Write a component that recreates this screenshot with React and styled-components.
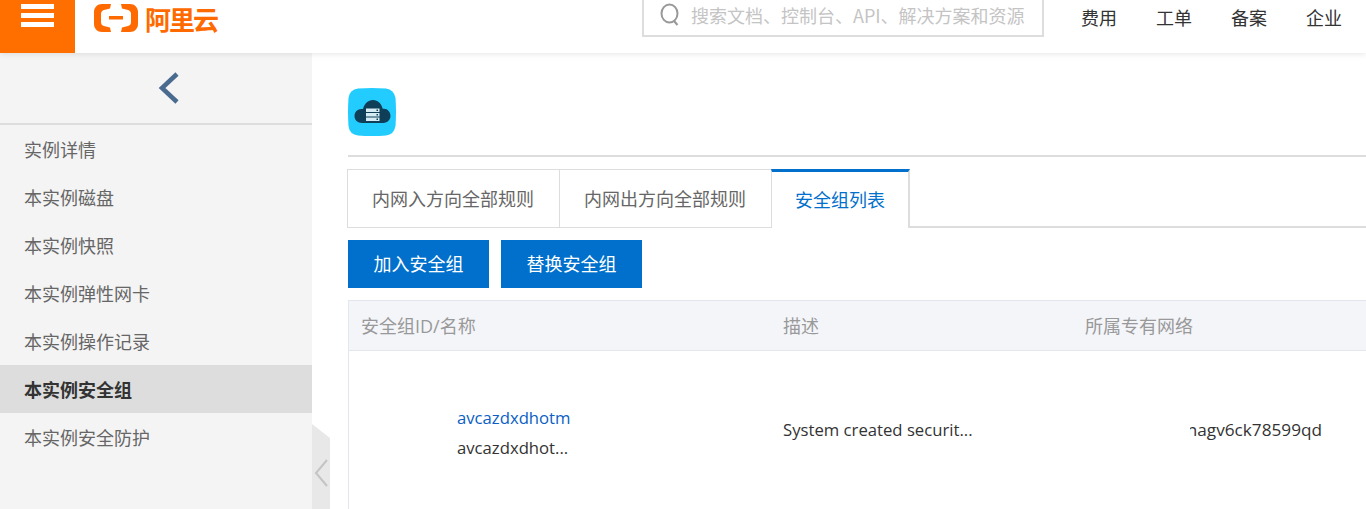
import React from 'react'
import styled, { createGlobalStyle } from 'styled-components'

const GlobalStyle = createGlobalStyle`
  html, body { margin: 0; padding: 0; height: 100%; overflow: hidden; background: #fff; }
  body { font-family: "Open Sans", "Noto Sans CJK SC", sans-serif; font-size: 18px; color: #333; }
  * { box-sizing: border-box; }
`

const Page = styled.div`
  width: 1366px;
  height: 509px;
  display: flex;
  flex-direction: column;
  overflow: hidden;
`

const Header = styled.header`
  position: relative;
  z-index: 2;
  flex: 0 0 53px;
  display: flex;
  align-items: flex-start;
  background: #fff;
  box-shadow: 0 1px 6px rgba(0, 0, 0, 0.1);
`

const MenuButton = styled.div`
  width: 75px;
  height: 53px;
  background: #ff6f00;
  display: flex;
  flex-direction: column;
  align-items: center;
  gap: 4px;
  padding-top: 4px;
`

const MenuBar = styled.span`
  width: 33px;
  height: 5px;
  background: #fff;
`

const Logo = styled.div`
  display: flex;
  align-items: center;
  gap: 7px;
  margin-left: 19px;
  height: 36px;
  color: #ff6a00;
  font-size: 26px;
  letter-spacing: -2px;
  font-weight: 700;
  font-family: "Noto Sans CJK SC", sans-serif;
`

const SearchBox = styled.div`
  width: 402px;
  height: 37px;
  margin-left: auto;
  display: flex;
  align-items: center;
  gap: 10px;
  padding: 0 0 6px 15px;
  border: 2px solid #ddd;
  border-top: 0;
  color: #c4c4c4;
  white-space: nowrap;
  font-family: "Noto Sans CJK SC", sans-serif;
`

const NavList = styled.nav`
  display: flex;
  gap: 39px;
  margin-left: 37px;
  padding: 3px 24px 0 0;
  line-height: 28px;
  color: #333;
  font-family: "Noto Sans CJK SC", sans-serif;
`

const Body = styled.div`
  position: relative;
  flex: 1;
  display: flex;
  min-height: 0;
`

const Sidebar = styled.aside`
  flex: 0 0 312px;
  background: #f4f4f4;
`

const CollapseRow = styled.div`
  height: 72px;
  display: flex;
  align-items: center;
  justify-content: center;
  padding: 0 0 0 25px;
  border-bottom: 2px solid #ddd;
`

const SideItem = styled.div`
  height: 48px;
  line-height: 48px;
  padding-left: 24px;
  font-family: "Noto Sans CJK SC", sans-serif;
  color: ${p => (p.$active ? '#333' : '#666')};
  font-weight: ${p => (p.$active ? 700 : 400)};
  background: ${p => (p.$active ? '#ddd' : 'transparent')};
`

const SideTab = styled.div`
  position: absolute;
  left: 312px;
  top: 371px;
  width: 18px;
  height: 90px;
  display: flex;
  align-items: center;
  justify-content: center;
  padding-top: 8px;
  background: #e8e8e8;
  clip-path: polygon(0 0, 100% 14px, 100% 100%, 0 100%);
`

const Main = styled.main`
  flex: 1;
  min-width: 0;
  padding: 35px 0 0 36px;
`

const TitleRow = styled.div`
  height: 69px;
  border-bottom: 2px solid #ddd;
`

const Tabs = styled.div`
  display: flex;
  height: 59px;
  margin: 12px 0 12px -1px;
  border-bottom: 2px solid #ddd;
`

const Tab = styled.div`
  height: ${p => (p.$active ? '59px' : '58px')};
  padding: ${p => (p.$active ? '0 23px 2px 23px' : '0 25px 2px 24px')};
  margin-right: ${p => (p.$active ? '0' : '-1px')};
  display: flex;
  align-items: center;
  white-space: nowrap;
  font-family: "Noto Sans CJK SC", sans-serif;
  background: #fff;
  color: ${p => (p.$active ? '#0070cc' : '#666')};
  border-style: solid;
  border-color: #ddd;
  border-width: ${p => (p.$active ? '3px 2px 0 1px' : '1px 1px 0 1px')};
  border-top-color: ${p => (p.$active ? '#0070cc' : '#ddd')};
  position: relative;
`

const Toolbar = styled.div`
  display: flex;
  gap: 12px;
  margin-bottom: 12px;
`

const Button = styled.div`
  width: 141px;
  height: 48px;
  display: flex;
  align-items: center;
  justify-content: center;
  padding-bottom: 2px;
  background: #0070cc;
  color: #fff;
  font-family: "Noto Sans CJK SC", sans-serif;
`

const Table = styled.div`
  border-left: 1px solid #e3e6ec;
  border-top: 1px solid #e3e6ec;
`

const HeadRow = styled.div`
  display: grid;
  grid-template-columns: 422px 302px 1fr;
  height: 50px;
  align-items: center;
  padding-bottom: 2px;
  background: #f4f5f9;
  color: #999;
  border-bottom: 1px solid #e3e6ec;
`

const HeadCell = styled.div`
  padding-left: 12px;
`

const DataRow = styled.div`
  display: grid;
  grid-template-columns: 422px 302px 1fr;
  height: 158px;
  align-items: start;
  padding-top: 53px;
`

const NameCell = styled.div`
  padding-left: 108px;
  line-height: 28px;
  font-size: 16.7px;
`

const NameLink = styled.div`
  color: #0b5fc4;
  height: 30px;
`

const PlainCell = styled.div`
  padding: 12px 0 0 12px;
  line-height: 28px;
  font-size: 16.7px;
  white-space: nowrap;
`

const ClippedId = styled.div`
  margin: 12px 0 0 117px;
  width: 132px;
  display: flex;
  justify-content: flex-end;
  overflow: hidden;
  line-height: 28px;
  font-size: 17.2px;
  white-space: nowrap;
`

function App() {
  const sideItems = ['实例详情', '本实例磁盘', '本实例快照', '本实例弹性网卡', '本实例操作记录', '本实例安全组', '本实例安全防护']
  return (
    <Page>
      <GlobalStyle />
      <Header>
        <MenuButton>
          <MenuBar />
          <MenuBar />
          <MenuBar />
        </MenuButton>
        <Logo>
          <svg width="44" height="28" viewBox="0 0 44 28" fill="#ff6a00">
            <path d="M8 0h9l-1 4.500-6 1.500c-1.800.5-3 2-3 3.800v8.400c0 1.800 1.200 3.300 3 3.800l6 1.500 1 4.500H8c-4.500 0-8-3.500-8-8V8c0-4.500 3.500-8 8-8z" />
            <path d="M36 0h-9l1 4.500 6 1.500c1.800.5 3 2 3 3.800v8.400c0 1.800-1.200 3.300-3 3.800l-6 1.500-1 4.500h9c4.500 0 8-3.500 8-8V8c0-4.500-3.500-8-8-8z" />
            <rect x="15" y="12" width="14" height="3.500" />
          </svg>
          <span>阿里云</span>
        </Logo>
        <SearchBox>
          <svg width="22" height="24" viewBox="0 0 22 24" fill="none" stroke="#999" strokeWidth="2">
            <ellipse cx="10.500" cy="10.500" rx="8" ry="9" />
            <path d="M15 18l3.500 4" />
          </svg>
          <span>搜索文档、控制台、API、解决方案和资源</span>
        </SearchBox>
        <NavList>
          <span>费用</span>
          <span>工单</span>
          <span>备案</span>
          <span>企业</span>
        </NavList>
      </Header>
      <Body>
        <Sidebar>
          <CollapseRow>
            <svg width="22" height="32" viewBox="0 0 22 32" fill="none" stroke="#4a6a8f" strokeWidth="4.500">
              <path d="M19 2L4 16l15 14" />
            </svg>
          </CollapseRow>
          {sideItems.map(item => (
            <SideItem key={item} $active={item === '本实例安全组'}>{item}</SideItem>
          ))}
        </Sidebar>
        <SideTab>
          <svg width="14" height="28" viewBox="0 0 14 28" fill="none" stroke="#c4c4c4" strokeWidth="2">
            <path d="M13 1L2 14l11 13" />
          </svg>
        </SideTab>
        <Main>
          <TitleRow>
            <svg width="48" height="48" viewBox="0 0 48 48">
              <path d="M10 .5Q24-.5 38 .5 46 1.500 47.500 10 48.500 24 47.500 38 46 46.500 38 47.500 24 48.500 10 47.500 1.500 46.500.5 38-.5 24 .5 10 1.500 1.500 10 .5z" fill="#22ccff" />
              <path d="M14 35c-4.500 0-7.500-3.200-7.500-7s3-7 7-7c.5 0 1 0 1.500.1C16.500 15.500 20 12 25 12s8.500 3.500 9.700 8.800c.4-.1.800-.1 1.300-.1 3.800 0 6.500 3.300 6.500 7.100s-3 7.200-7 7.200z" fill="#0f3f58" />
              <g fill="#d6ecf4">
                <rect x="18" y="20.500" width="13.500" height="3.500" />
                <rect x="18" y="25" width="13.500" height="3.500" />
                <rect x="18" y="29.500" width="13.500" height="3.500" />
              </g>
              <g fill="#0f3f58">
                <rect x="28.500" y="21.500" width="1.500" height="1.500" />
                <rect x="28.500" y="26" width="1.500" height="1.500" />
                <rect x="28.500" y="30.500" width="1.500" height="1.500" />
              </g>
            </svg>
          </TitleRow>
          <Tabs>
            <Tab>内网入方向全部规则</Tab>
            <Tab>内网出方向全部规则</Tab>
            <Tab $active>安全组列表</Tab>
          </Tabs>
          <Toolbar>
            <Button>加入安全组</Button>
            <Button>替换安全组</Button>
          </Toolbar>
          <Table>
            <HeadRow>
              <HeadCell>安全组ID/名称</HeadCell>
              <HeadCell>描述</HeadCell>
              <HeadCell>所属专有网络</HeadCell>
            </HeadRow>
            <DataRow>
              <NameCell>
                <NameLink>avcazdxdhotm</NameLink>
                <div>avcazdxdhot...</div>
              </NameCell>
              <PlainCell>System created securit...</PlainCell>
              <ClippedId>nagv6ck78599qd</ClippedId>
            </DataRow>
          </Table>
        </Main>
      </Body>
    </Page>
  )
}

export default App
